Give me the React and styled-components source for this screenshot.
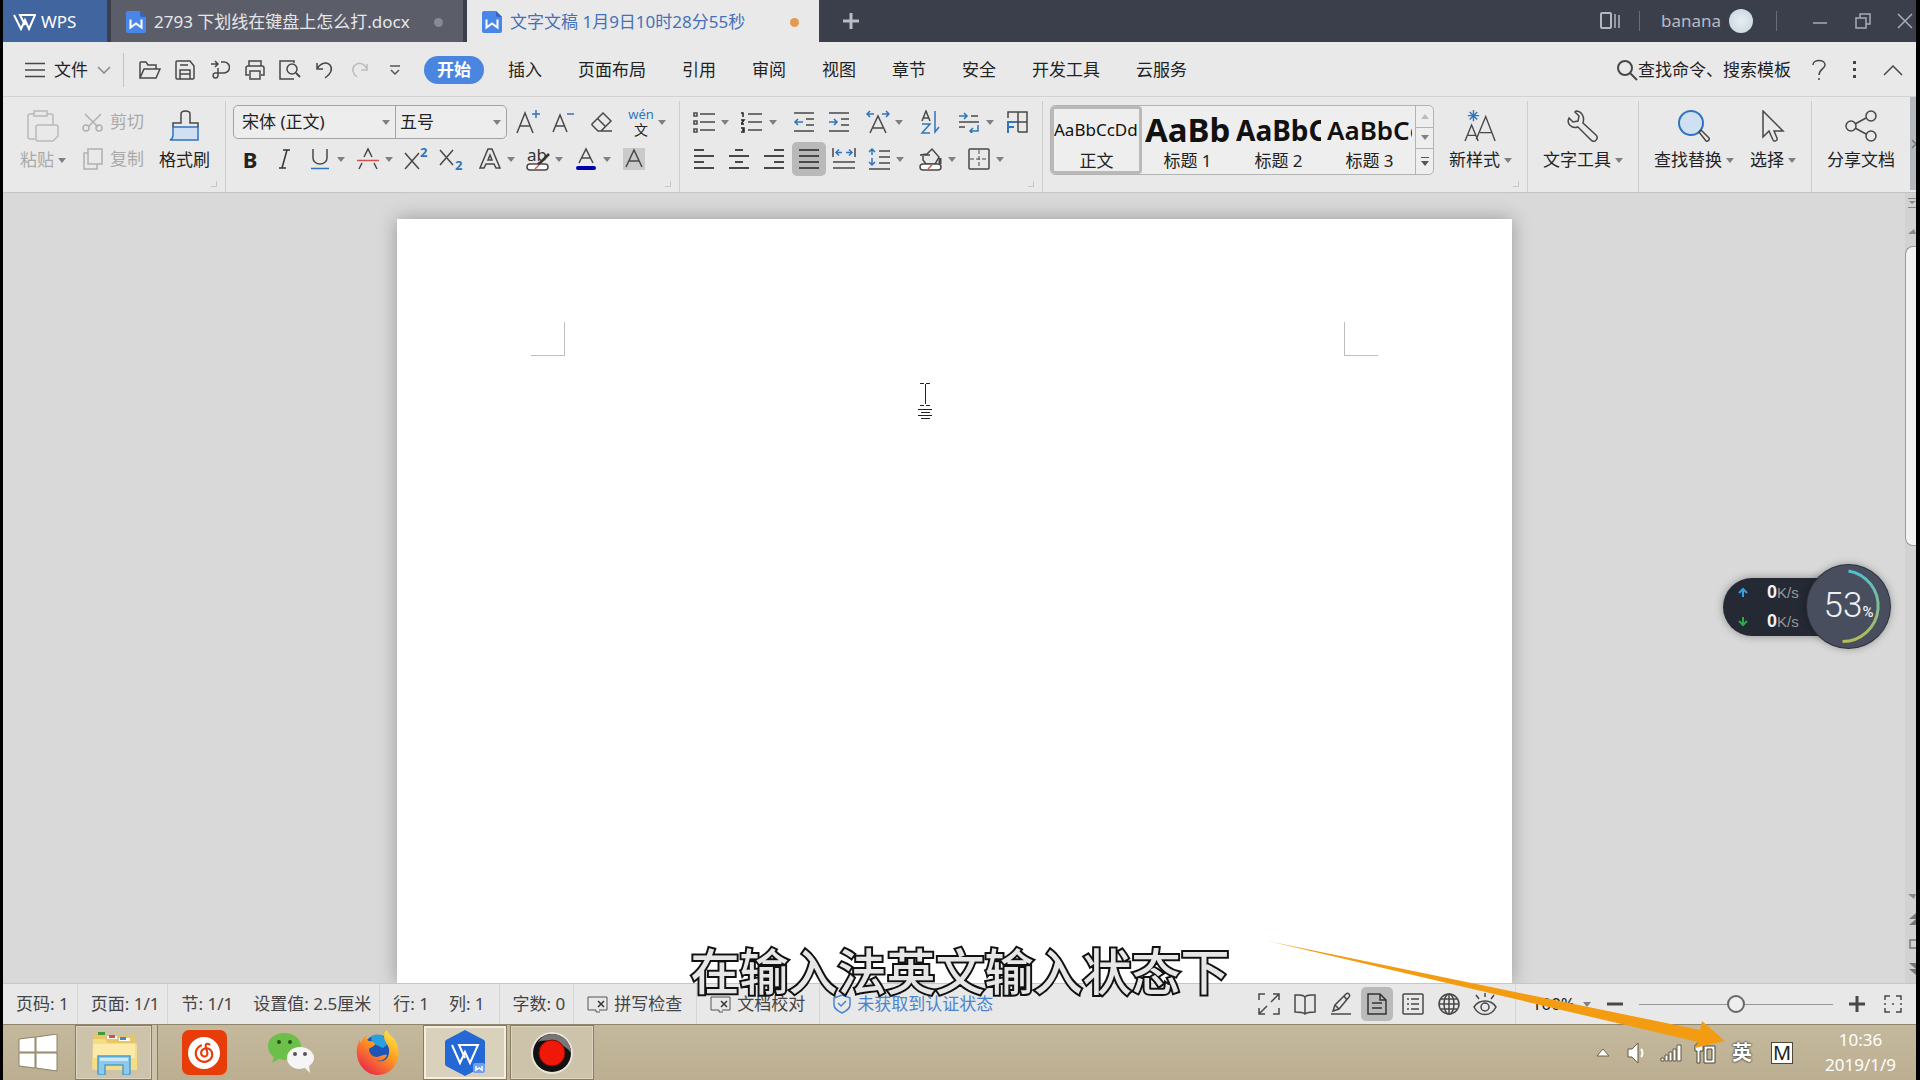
import React from 'react';
import styled, { createGlobalStyle, css } from 'styled-components';
import { SiNeteasecloudmusic } from 'react-icons/si';

const BLUE = '#2f74bd';

const MENUS = ['插入', '页面布局', '引用', '审阅', '视图', '章节', '安全', '开发工具', '云服务'];

const STYLES = [
  { name: '正文', sample: 'AaBbCcDd', size: 17, weight: 400, active: true },
  { name: '标题 1', sample: 'AaBbCcDd', size: 33, weight: 700 },
  { name: '标题 2', sample: 'AaBbCcDd', size: 28, weight: 700 },
  { name: '标题 3', sample: 'AaBbCcDd', size: 26, weight: 600 },
];

function Icon({ w = 24, h = 24, children, ...rest }) {
  return (
    <Svg width={w} height={h} viewBox={`0 0 ${w} ${h}`} aria-hidden="true" {...rest}>
      {children}
    </Svg>
  );
}

function DocLogo() {
  return (
    <Icon w={20} h={22} stroke="none">
      <path d="M2 0h12l6 6v14a2 2 0 0 1-2 2H2a2 2 0 0 1-2-2V2a2 2 0 0 1 2-2z" fill="#4a86e8" />
      <path d="M14 0l6 6h-4a2 2 0 0 1-2-2z" fill="#3566bd" />
      <path d="M4.500 8.500v8l5.500-4 5.500 4v-8" stroke="#fff" strokeWidth="2" fill="none" />
    </Icon>
  );
}

function Tool({ label, caret, active, children }) {
  return (
    <ToolButton type="button" aria-label={label} title={label} $caret={caret}>
      <ToolFace $active={active}>{children}</ToolFace>
      {caret && <Caret />}
    </ToolButton>
  );
}

function Big({ label, caret, muted, children }) {
  return (
    <BigButton type="button" $muted={muted}>
      {children}
      <BigLabel>
        {label}
        {caret && <Caret />}
      </BigLabel>
    </BigButton>
  );
}

function TitleBar() {
  return (
    <TitleBarBox>
      <WpsButton type="button">
        <Icon w={23} h={17} stroke="#fff" strokeWidth="2">
          <path d="M1 1l7 14 4-9 4 9 6-14H7l5 10" />
        </Icon>
        WPS
      </WpsButton>
      <Tab type="button">
        <DocLogo />
        2793 下划线在键盘上怎么打.docx
        <TabDot />
      </Tab>
      <Tab type="button" $active>
        <DocLogo />
        文字文稿 1月9日10时28分55秒
        <TabDot $active />
      </Tab>
      <NewTab type="button" aria-label="新建">
        <Icon w={18} h={18} stroke="#b9bcc4" strokeWidth="3">
          <path d="M9 1v16M1 9h16" />
        </Icon>
      </NewTab>
      <TitleRight>
        <WindowButton type="button" aria-label="工作区">
          <Icon w={20} h={18} stroke="#b4b7c0" strokeWidth="2">
            <rect x="1" y="1" width="10" height="15" rx="1" />
            <path d="M15 2v14M19 3v13" strokeWidth="1.500" />
          </Icon>
        </WindowButton>
        <TitleLine />
        <User type="button">
          banana
          <Avatar />
        </User>
        <TitleLine />
        <WindowButton type="button" aria-label="最小化">
          <Icon w={16} h={16} stroke="#a9acb6">
            <path d="M1 10h14" />
          </Icon>
        </WindowButton>
        <WindowButton type="button" aria-label="还原">
          <Icon w={16} h={16} stroke="#a9acb6">
            <rect x="1" y="5" width="10" height="10" />
            <path d="M5 5V1h10v10h-4" />
          </Icon>
        </WindowButton>
        <WindowButton type="button" aria-label="关闭">
          <Icon w={16} h={16} stroke="#a9acb6">
            <path d="M1 1l14 14M15 1L1 15" />
          </Icon>
        </WindowButton>
      </TitleRight>
    </TitleBarBox>
  );
}

function MenuBar() {
  return (
    <MenuBarBox>
      <FileButton type="button">
        <Icon w={20} h={16}>
          <path d="M0 1.500h20M0 8h20M0 14.500h20" />
        </Icon>
        文件
        <Icon w={14} h={8} stroke="#8a8a8a">
          <path d="M1 1l6 6 6-6" />
        </Icon>
      </FileButton>
      <QuickBar>
        <QuickButton type="button" aria-label="打开">
          <Icon w={22} h={20}>
            <path d="M1 18V3a1 1 0 0 1 1-1h5l2 3h8v4M1 18l4-9h16l-4 9z" />
          </Icon>
        </QuickButton>
        <QuickButton type="button" aria-label="保存">
          <Icon w={20} h={20}>
            <path d="M2 1h13l4 5v12a1 1 0 0 1-1 1H2a1 1 0 0 1-1-1V2a1 1 0 0 1 1-1z" />
            <path d="M5 19v-9h10v9M5 5h8M5 14h10" />
          </Icon>
        </QuickButton>
        <QuickButton type="button" aria-label="输出为PDF">
          <Icon w={20} h={20}>
            <path d="M1 4h7M5 1l3 3-3 3M11 2h3a5 5 0 0 1 0 11H5a2.500 2.500 0 1 0 3 3V8" />
          </Icon>
        </QuickButton>
        <QuickButton type="button" aria-label="打印">
          <Icon w={20} h={20}>
            <path d="M4 6V1h12v5M4 15H1V8a2 2 0 0 1 2-2h14a2 2 0 0 1 2 2v7h-3M5 11h10v8H5z" />
          </Icon>
        </QuickButton>
        <QuickButton type="button" aria-label="打印预览">
          <Icon w={22} h={20}>
            <path d="M15 3V1H1v18h14" />
            <circle cx="13" cy="9" r="5" />
            <path d="M17 13l4 4" strokeWidth="2" />
          </Icon>
        </QuickButton>
        <QuickButton type="button" aria-label="撤销">
          <Icon w={20} h={20}>
            <path d="M2 3v6h6M2 9c4-7 10-7 13-4 3 4 1 9-5 13" />
          </Icon>
        </QuickButton>
        <QuickButton type="button" aria-label="恢复">
          <Icon w={20} h={20} stroke="#bcbcbc">
            <path d="M17 4v6h-6M17 9c-3-6-8-7-12-4-4 4-2 9 2 12" />
          </Icon>
        </QuickButton>
        <QuickButton type="button" aria-label="自定义快速访问工具栏">
          <Icon w={14} h={12} stroke="#555">
            <path d="M2 2h10M3 6l4 4 4-4" />
          </Icon>
        </QuickButton>
      </QuickBar>
      <Menus>
        <MenuItem type="button" $active>开始</MenuItem>
        {MENUS.map((name) => (
          <MenuItem type="button" key={name}>{name}</MenuItem>
        ))}
      </Menus>
      <MenuRight>
        <Finder type="button">
          <Icon w={22} h={22} strokeWidth="2">
            <circle cx="9" cy="9" r="7" />
            <path d="M14 14l7 7" />
          </Icon>
          查找命令、搜索模板
        </Finder>
        <HelpButton type="button" aria-label="帮助">
          <Icon w={16} h={22}>
            <path d="M2 6c0-6 12-6 12 0 0 4-6 4-6 10M8 19v2" />
          </Icon>
        </HelpButton>
        <HelpButton type="button" aria-label="更多">
          <Icon w={4} h={20} stroke="none">
            <path d="M0 1h3v3H0zM0 8h3v3H0zM0 15h3v3H0z" fill="#444" />
          </Icon>
        </HelpButton>
        <HelpButton type="button" aria-label="收起功能区">
          <Icon w={20} h={12}>
            <path d="M1 11l9-9 9 9" />
          </Icon>
        </HelpButton>
      </MenuRight>
    </MenuBarBox>
  );
}

function AlignIcon({ rows }) {
  return (
    <Icon w={22} h={22} strokeWidth="2" shapeRendering="crispEdges">
      {rows.map(([x1, x2], i) => (
        <path key={i} d={`M${x1} ${2 + i * 6}H${x2}`} />
      ))}
    </Icon>
  );
}

function ClipboardGroup() {
  return (
    <Group $first>
      <Big label="粘贴" caret muted>
        <Icon w={32} h={32} stroke="#b9b9b9">
          <path d="M8 29H3a2 2 0 0 1-2-2V6a2 2 0 0 1 2-2h4M20 4h4a2 2 0 0 1 2 2v8" />
          <path d="M7 1h13v5H7z" />
          <path d="M11 15h18a2 2 0 0 1 2 2v9l-5 5H11a2 2 0 0 1-2-2V17a2 2 0 0 1 2-2z" />
        </Icon>
      </Big>
      <Stack>
        <SmallButton type="button">
          <Icon w={22} h={20} stroke="#b0b0b0">
            <path d="M3 2l13 13M19 2L6 15" />
            <circle cx="4" cy="16" r="3" />
            <circle cx="17" cy="16" r="3" />
          </Icon>
          剪切
        </SmallButton>
        <SmallButton type="button">
          <Icon w={22} h={22} stroke="#b0b0b0">
            <path d="M6 1h14v15H6zM6 5H2v16h13v-5" />
          </Icon>
          复制
        </SmallButton>
      </Stack>
      <Big label="格式刷">
        <Icon w={32} h={32}>
          <path d="M4 17h25v13H1c2-1 3-3 3-5z" fill="#cfe0f3" stroke={BLUE} />
          <path d="M4 17v-4h8V4c0-4 9-4 9 0v9h8v4" />
        </Icon>
      </Big>
      <Corner />
    </Group>
  );
}

function FontGroup() {
  return (
    <Group>
      <Stack>
        <Row>
          <Combos>
            <Combo $grow>
              <Select aria-label="字体" defaultValue="宋体 (正文)">
                <option>宋体 (正文)</option>
              </Select>
              <Caret />
            </Combo>
            <Combo>
              <Select aria-label="字号" defaultValue="五号">
                <option>五号</option>
              </Select>
              <Caret />
            </Combo>
          </Combos>
          <Cluster>
            <Tool label="增大字号">
              <Icon w={26} h={26}>
                <path d="M2 24L10 4l8 20M5 17h10" />
                <path d="M17 5h8M21 1v8" stroke={BLUE} />
              </Icon>
            </Tool>
            <Tool label="减小字号">
              <Icon w={26} h={26}>
                <path d="M3 23L10 6l7 17M6 17h8" />
                <path d="M17 5h7" stroke={BLUE} />
              </Icon>
            </Tool>
          </Cluster>
          <Cluster>
            <Tool label="清除格式">
              <Icon>
                <path d="M2 14L13 3l8 8-10 10H8l-6-6zM8 9l7 7M11 21h11" />
              </Icon>
            </Tool>
          </Cluster>
          <Cluster>
            <Tool label="拼音指南" caret>
              <Pinyin>wén</Pinyin>
              <PinyinBase>文</PinyinBase>
            </Tool>
          </Cluster>
        </Row>
        <Row>
          <Cluster>
            <Tool label="加粗">
              <Letter>B</Letter>
            </Tool>
            <Tool label="倾斜">
              <Icon stroke="#333">
                <path d="M10 3h7M6 21h7M14 3L9 21" />
              </Icon>
            </Tool>
            <Tool label="下划线" caret>
              <Icon>
                <path d="M5 2v9a7 6 0 0 0 14 0V2" />
                <path d="M3 21.500h18" stroke={BLUE} />
              </Icon>
            </Tool>
            <Tool label="删除线" caret>
              <Icon>
                <path d="M8 10l4-8 4 8M6 16l-3 6M18 16l3 6" />
                <path d="M1 13.500h22" stroke="#d4504f" />
              </Icon>
            </Tool>
            <Tool label="上标">
              <Icon w={26}>
                <path d="M2 6l14 16M16 6L2 22" />
                <text x="17" y="10" fill={BLUE}>2</text>
              </Icon>
            </Tool>
            <Tool label="下标">
              <Icon w={26}>
                <path d="M2 3l13 15M15 3L2 18" />
                <text x="17" y="23" fill={BLUE}>2</text>
              </Icon>
            </Tool>
          </Cluster>
          <Cluster>
            <Tool label="文字效果" caret>
              <Icon>
                <path d="M2 21L10 2h4l8 19h-4l-2-4H8l-2 4zM10 13l2-5 2 5z" />
              </Icon>
            </Tool>
            <Tool label="突出显示" caret>
              <Icon>
                <LightText x="1" y="14">ab</LightText>
                <rect x="1" y="17" width="21" height="6" rx="3" fill="#fff" />
                <path d="M9 22l4-4" stroke="#d4504f" />
                <path d="M23 7l-8 8-3 2" strokeWidth="2.500" stroke="#333" />
              </Icon>
            </Tool>
            <Tool label="字体颜色" caret>
              <Icon>
                <path d="M5 16l7-14 7 14M8 11h8" />
                <path d="M4 21h16" stroke="#0000ad" strokeWidth="4" strokeLinecap="round" />
              </Icon>
            </Tool>
            <Tool label="字符底纹">
              <Icon>
                <rect x="1" y="1" width="22" height="22" fill="#cacaca" stroke="none" />
                <path d="M4 20L12 3l8 17M7 14h10" />
              </Icon>
            </Tool>
          </Cluster>
        </Row>
      </Stack>
      <Corner />
    </Group>
  );
}

function ParagraphGroup() {
  return (
    <Group>
      <Stack>
        <Row>
          <Cluster>
            <Tool label="项目符号" caret>
              <Icon w={22} h={22}>
                <path d="M7 3h15M7 11h15M7 19h15" />
                <path d="M1 2h3v3H1zM1 10h3v3H1zM1 18h3v3H1z" />
              </Icon>
            </Tool>
            <Tool label="编号" caret>
              <Icon w={22} h={22}>
                <path d="M7 3h14M7 11h14M7 19h14" />
                <path d="M0 2h2v4M0 9h3l-3 4h3M0 17h3v4H0M1 19h2" stroke="#222" />
              </Icon>
            </Tool>
          </Cluster>
          <Cluster>
            <Tool label="减少缩进量">
              <Icon w={22} h={22}>
                <path d="M1 2h20M13 8h8M13 14h8M1 20h20" />
                <path d="M2 11h8M5 8l-3 3 3 3" stroke={BLUE} />
              </Icon>
            </Tool>
            <Tool label="增加缩进量">
              <Icon w={22} h={22}>
                <path d="M1 2h20M13 8h8M13 14h8M1 20h20" />
                <path d="M1 11h8M6 8l3 3-3 3" stroke={BLUE} />
              </Icon>
            </Tool>
          </Cluster>
          <Cluster>
            <Tool label="中文版式" caret>
              <Icon>
                <path d="M4 23l8-17 8 17M7 18h10" />
                <path d="M1 4h7M4 1L1 4l3 3M16 4h7M20 1l3 3-3 3" stroke={BLUE} />
              </Icon>
            </Tool>
          </Cluster>
          <Cluster>
            <Tool label="排序">
              <Icon>
                <path d="M4 11l4-10 4 10M5 8h6" />
                <path d="M4 14h8l-8 9h8M17 1v21l4-5" stroke={BLUE} />
              </Icon>
            </Tool>
          </Cluster>
          <Cluster>
            <Tool label="显示/隐藏编辑标记" caret>
              <Icon w={22} h={22}>
                <path d="M13 5h7M1 11h20M1 16h6" />
                <path d="M1 5h8M6 2l3 3-3 3M20 14v6h-8M15 17l-3 3 3 3" stroke={BLUE} />
              </Icon>
            </Tool>
            <Tool label="制表位">
              <Icon>
                <path d="M3 8V2h19v20h-9M13 2v20M9 12h13" />
                <path d="M3 23V12h7M3 17h6" stroke={BLUE} strokeWidth="2" />
              </Icon>
            </Tool>
          </Cluster>
        </Row>
        <Row>
          <Cluster>
            <Tool label="左对齐">
              <AlignIcon rows={[[1, 11], [1, 21], [1, 11], [1, 21]]} />
            </Tool>
            <Tool label="居中对齐">
              <AlignIcon rows={[[7, 15], [1, 21], [7, 15], [1, 21]]} />
            </Tool>
            <Tool label="右对齐">
              <AlignIcon rows={[[11, 21], [1, 21], [11, 21], [1, 21]]} />
            </Tool>
            <Tool label="两端对齐" active>
              <AlignIcon rows={[[1, 21], [1, 21], [1, 21], [1, 21]]} />
            </Tool>
            <Tool label="分散对齐">
              <Icon>
                <path d="M1 1v9M23 1v9M1 15h22M1 21h22" />
                <path d="M4 5.500h6M7 2.500l-3 3 3 3M14 5.500h6M17 2.500l3 3-3 3" stroke={BLUE} />
              </Icon>
            </Tool>
            <Tool label="行距" caret>
              <Icon w={22} h={22}>
                <path d="M11 3h11M11 9h11M11 15h11M1 21h21" />
                <path d="M4 1v6M1 4l3-3 3 3M4 10v7M1 14l3 3 3-3" stroke={BLUE} />
              </Icon>
            </Tool>
          </Cluster>
          <Cluster>
            <Tool label="底纹颜色" caret>
              <Icon>
                <path d="M1 8l7-1 5-5 7 8-4 7H7l-3-4V9M1 8h10" />
                <path d="M21 11v6" strokeWidth="3" />
                <rect x="1" y="17" width="21" height="6" rx="3" fill="#fff" />
                <path d="M9 22l4-4" stroke="#d4504f" />
              </Icon>
            </Tool>
            <Tool label="边框" caret>
              <Icon w={22} h={22}>
                <rect x="1" y="1" width="20" height="20" rx="1" />
                <path d="M11 2v18M2 11h18" strokeDasharray="4 2" strokeWidth="1" />
              </Icon>
            </Tool>
          </Cluster>
        </Row>
      </Stack>
      <Corner />
    </Group>
  );
}

function StyleGroup() {
  return (
    <Group>
      <Gallery>
        {STYLES.map((item) => (
          <StyleCard type="button" key={item.name} $active={item.active}>
            <Sample $size={item.size} $weight={item.weight}>{item.sample}</Sample>
            {item.name}
          </StyleCard>
        ))}
        <GalleryNav>
          <NavButton type="button" aria-label="上一行">
            <Icon w={8} h={5} stroke="none"><path d="M0 5l4-5 4 5z" fill="#bbb" /></Icon>
          </NavButton>
          <NavButton type="button" aria-label="下一行">
            <Caret />
          </NavButton>
          <NavButton type="button" aria-label="展开">
            <Icon w={8} h={9} stroke="none"><path d="M0 0h8v1H0zM0 4h8l-4 5z" fill="#555" /></Icon>
          </NavButton>
        </GalleryNav>
      </Gallery>
      <Big label="新样式" caret>
        <Icon w={36} h={34}>
          <path d="M1 33l7-17 7 17M4 27h8M13 31L23 7l10 26M17 24h12" />
          <path d="M10 0v12M4 6h12M6 2l8 8M14 2l-8 8" stroke={BLUE} />
        </Icon>
      </Big>
      <Corner />
    </Group>
  );
}

function ToolGroups() {
  return (
    <>
      <Group>
        <Big label="文字工具" caret>
          <Icon w={32} h={32}>
            <path d="M9 1l-1 1 4 4-1 5-5 1-4-4c-3 6 3 11 9 9l13 13c4 4 8-2 5-5L16 13c2-7-2-12-7-12z" />
          </Icon>
        </Big>
      </Group>
      <Group>
        <Big label="查找替换" caret>
          <Icon w={32} h={32}>
            <circle cx="13" cy="13" r="12" fill="#cfe0f3" stroke={BLUE} strokeWidth="2" />
            <path d="M21 22l2-2 8 8c1 1-1 4-3 3z" />
          </Icon>
        </Big>
        <Big label="选择" caret>
          <Icon w={24} h={32}>
            <path d="M2 1v26l6-6 4 9c1 2 5 1 4-2l-3-7h9z" />
          </Icon>
        </Big>
      </Group>
      <Group $last>
        <Big label="分享文档">
          <Icon w={32} h={32}>
            <circle cx="6" cy="16" r="5" />
            <circle cx="26" cy="6" r="5" />
            <circle cx="26" cy="26" r="5" />
            <path d="M10 14l11-6M10 18l11 6" />
          </Icon>
        </Big>
      </Group>
      <RibbonMore type="button" aria-label="展开功能区">
        <Icon w={6} h={10} stroke="#777"><path d="M2 1l4 4-4 4" /></Icon>
      </RibbonMore>
    </>
  );
}

function Workspace() {
  return (
    <WorkspaceBox>
      <Desk>
        <Page>
          <Marks>
            <Mark $left />
            <Mark />
          </Marks>
          <Pointer>
            <Icon w={16} h={38} stroke="#222" shapeRendering="crispEdges">
              <path d="M3 1h4M9 1h4M8 2v20M3 23h4M9 23h4" strokeWidth="1" />
              <path d="M1 27h14M4 30h9M1 33h14M4 36h9" strokeWidth="1" />
            </Icon>
          </Pointer>
        </Page>
      </Desk>
      <ScrollTrack>
        <Icon w={8} h={12} stroke="none"><path d="M0 1h8v1H0zM1 4l3 3 4-3zM0 10h8v1H0z" fill="#888" /></Icon>
        <Icon w={8} h={5} stroke="none"><path d="M0 5l6-5 2 5z" fill="#888" /></Icon>
        <ScrollThumb />
        <ScrollEnd>
          <Icon w={8} h={5} stroke="none"><path d="M0 0h8L6 5z" fill="#888" /></Icon>
          <Icon w={8} h={12} stroke="none"><path d="M1 6l7-6v6zM1 12l7-6v6z" fill="#777" /></Icon>
          <Icon w={8} h={10} stroke="#777"><path d="M8 1H2v8h6" /></Icon>
          <Icon w={8} h={12} stroke="none"><path d="M1 0h7v6zM1 6h7v6z" fill="#777" /></Icon>
        </ScrollEnd>
      </ScrollTrack>
      <Monitor>
        <Speeds>
          <Speed>
            <Icon w={10} h={11} stroke="#3b9be0" strokeWidth="2"><path d="M5 10V2M1 6l4-4 4 4" /></Icon>
            <Rate><strong>0</strong>K/s</Rate>
          </Speed>
          <Speed>
            <Icon w={10} h={11} stroke="#2fa84a" strokeWidth="2"><path d="M5 1v8M1 5l4 4 4-4" /></Icon>
            <Rate><strong>0</strong>K/s</Rate>
          </Speed>
        </Speeds>
        <Dial>
          <DialRing viewBox="0 0 84 84" aria-hidden="true">
            <defs>
              <linearGradient id="ring" x1="0" y1="0" x2="0" y2="1">
                <stop offset="0" stopColor="#4fc0cf" />
                <stop offset="1" stopColor="#b3bd55" />
              </linearGradient>
            </defs>
            <path d="M42 6A36 36 0 0 1 36 77.500" fill="none" stroke="url(#ring)" strokeWidth="3" />
          </DialRing>
          <DialText>53<small>%</small></DialText>
        </Dial>
      </Monitor>
    </WorkspaceBox>
  );
}

function BookCheck() {
  return (
    <Icon w={21} h={18} stroke="#555">
      <path d="M9 2H1v13h8M9 2h3M9 15v2h4M12 2h8v13h-8" strokeWidth="1" />
      <path d="M11 6l6 6M17 6l-6 6" stroke="#333" />
    </Icon>
  );
}

function StatusBar() {
  return (
    <StatusBarBox>
      <StatusItem>页码: 1</StatusItem>
      <StatusItem>页面: 1/1</StatusItem>
      <StatusItem>
        <span>节: 1/1</span>
        <span>设置值: 2.5厘米</span>
      </StatusItem>
      <StatusItem $wide>
        <span>行: 1</span>
        <span>列: 1</span>
      </StatusItem>
      <StatusItem>字数: 0</StatusItem>
      <StatusItem $wide $tight>
        <BookCheck />
        拼写检查
      </StatusItem>
      <StatusItem $wide $tight>
        <BookCheck />
        文档校对
      </StatusItem>
      <StatusItem $wide $tight $link>
        <Icon w={18} h={20} stroke="#4a83cf">
          <path d="M9 1l8 3v7c0 4-4 6-8 8-4-2-8-4-8-8V4z" />
          <path d="M5 9l3 3 5-5" />
        </Icon>
        未获取到认证状态
      </StatusItem>
      <Views>
        <ViewButton type="button" aria-label="全屏显示">
          <Icon w={22} h={22}>
            <path d="M1 7V1h6M15 1h6v6M21 15v6h-6M7 21H1v-6M20 2l-7 7M2 20l7-7" />
          </Icon>
        </ViewButton>
        <ViewButton type="button" aria-label="阅读版式">
          <Icon w={22} h={22}>
            <path d="M11 4c-2-3-6-2-10-2v17c4 0 8 0 10 2 2-2 6-2 10-2V2c-4 0-8-1-10 2zM11 4v17" />
          </Icon>
        </ViewButton>
        <ViewButton type="button" aria-label="写作模式">
          <Icon w={22} h={24}>
            <path d="M1 22h20M3 19l2-6L16 2c2-2 5 1 3 3L9 17zM14 4l3 4M5 13l4 4" />
          </Icon>
        </ViewButton>
        <ViewButton type="button" aria-label="页面视图" $active>
          <Icon w={20} h={22} stroke="#333">
            <path d="M1 1h12l6 6v14H1zM13 1v6h6M5 10h10M5 15h10" />
          </Icon>
        </ViewButton>
        <ViewButton type="button" aria-label="大纲视图">
          <Icon w={22} h={22}>
            <rect x="1" y="1" width="20" height="20" rx="1" />
            <path d="M5 6h2M5 11h2M5 16h2M9 6h8M9 11h8M9 16h8" />
          </Icon>
        </ViewButton>
        <ViewButton type="button" aria-label="Web版式">
          <Icon w={22} h={22}>
            <circle cx="11" cy="11" r="10" />
            <ellipse cx="11" cy="11" rx="5" ry="10" />
            <path d="M11 1v20M1 11h20M3 6h16M3 16h16" />
          </Icon>
        </ViewButton>
        <ViewButton type="button" aria-label="护眼模式">
          <Icon w={24} h={24}>
            <path d="M1 15c5-8 17-8 22 0-5 10-17 10-22 0zM12 1v4M3 3l3 4M21 3l-3 4" />
            <circle cx="12" cy="15" r="4" />
          </Icon>
        </ViewButton>
      </Views>
      <Zoom>
        <ZoomValue type="button">100%<Caret /></ZoomValue>
        <ViewButton type="button" aria-label="缩小">
          <Icon w={16} h={16} strokeWidth="3"><path d="M0 8h16" /></Icon>
        </ViewButton>
        <Slider type="range" min="0" max="100" defaultValue="50" aria-label="缩放" />
        <ViewButton type="button" aria-label="放大">
          <Icon w={16} h={16} strokeWidth="3"><path d="M0 8h16M8 0v16" /></Icon>
        </ViewButton>
        <ViewButton type="button" aria-label="最佳显示比例">
          <Icon w={18} h={18}>
            <path d="M1 5V1h5M12 1h5v4M17 13v4h-5M6 17H1v-4M8 9h2M1 8v2M17 8v2" />
          </Icon>
        </ViewButton>
      </Zoom>
    </StatusBarBox>
  );
}

function ExplorerIcon() {
  return (
    <Icon w={46} h={44} stroke="none">
      <path d="M3 4l2-2h9l2 3h28v8H3z" fill="#e9c568" />
      <rect x="7" y="1" width="7" height="3" fill="#3f9a3c" />
      <rect x="16" y="5" width="10" height="3" fill="#fff" />
      <rect x="18" y="4" width="6" height="3" fill="#d6513b" />
      <rect x="28" y="7" width="11" height="3" fill="#fff" />
      <rect x="29" y="6" width="6" height="3" fill="#3b8fc9" />
      <path d="M2 8h12l3 4h27a2 2 0 0 1 2 2v25H3a2 2 0 0 1-2-2z" fill="#f5dd86" />
      <path d="M2 13h42v14H2z" fill="#fbeaa8" />
      <path d="M7 25h32v17a2 2 0 0 1-2 2h-5V34H14v10H9a2 2 0 0 1-2-2z" fill="#8cc9ea" stroke="#4b9fcb" />
      <path d="M9 27h28v3H9z" fill="#c8eafb" />
    </Icon>
  );
}

function FirefoxIcon() {
  return (
    <Icon w={46} h={46} stroke="none">
      <defs>
        <linearGradient id="fox" x1="0.900" y1="0" x2="0.200" y2="1">
          <stop offset="0" stopColor="#fff04a" />
          <stop offset="0.450" stopColor="#ff9a1f" />
          <stop offset="1" stopColor="#e8214f" />
        </linearGradient>
      </defs>
      <circle cx="23" cy="20" r="15" fill="#1c55b5" />
      <path d="M16 6c8-4 15 0 18 7l-6 5-11-5z" fill="#2a9fe0" />
      <path
        d="M5 9c0 2 0 3 1 4C7 9 10 6 12 5c-1 3 0 5 2 6 3 0 5 1 6 3-1 3-4 3-6 5 0 4 3 8 8 8 5-1 7-3 10-2-2 5-7 7-12 5 9 4 15-2 14-11-1-5-5-8-5-13 0-3 1-5 3-6 1 5 7 7 9 12 7 14-1 33-18 33C7 45-4 26 5 9z"
        fill="url(#fox)"
      />
    </Icon>
  );
}

function Taskbar() {
  return (
    <TaskbarBox>
      <TaskButton type="button" aria-label="开始菜单" $start>
        <Icon w={40} h={38} stroke="#8c8267" strokeWidth="1">
          <path d="M1 5l16-2v15H1zM18 3l21-3v18H18zM1 19h16v15L1 32zM18 19h21v18l-21-3z" fill="#fff" />
        </Icon>
      </TaskButton>
      <TaskButton type="button" aria-label="文件资源管理器" $open $stacked>
        <ExplorerIcon />
      </TaskButton>
      <TaskButton type="button" aria-label="网易云音乐">
        <NetEase>
          <SiNeteasecloudmusic size={32} />
        </NetEase>
      </TaskButton>
      <TaskButton type="button" aria-label="微信">
        <Icon w={48} h={42} stroke="none">
          <path d="M17 1C7 1 1 7 1 14c0 5 3 9 6 11l-2 6 7-4c18 4 22-5 22-13C34 7 27 1 17 1z" fill="#6cc04a" />
          <circle cx="12" cy="10" r="2" fill="#27511a" />
          <circle cx="23" cy="10" r="2" fill="#27511a" />
          <path d="M33 15c-8 0-13 5-13 11s5 11 13 11l5-1 5 5-1-7c3-2 5-5 5-8 0-6-6-11-14-11z" fill="#f5f5f5" />
          <circle cx="28" cy="22" r="2" fill="#555" />
          <circle cx="38" cy="22" r="2" fill="#555" />
        </Icon>
      </TaskButton>
      <TaskButton type="button" aria-label="Firefox">
        <FirefoxIcon />
      </TaskButton>
      <TaskButton type="button" aria-label="WPS" $open $current>
        <Icon w={42} h={46} stroke="none">
          <path d="M21 0l19 10a3 3 0 0 1 1 3v20a3 3 0 0 1-1 3L21 46 2 36a3 3 0 0 1-1-3V13a3 3 0 0 1 1-3z" fill="#2468d6" />
          <path d="M8 15l8 18 5-11 5 11 8-18H15l6 13" fill="none" stroke="#fff" strokeWidth="2" />
          <rect x="29" y="33" width="12" height="10" rx="2" fill="#6f9fee" />
          <path d="M32 36v4l3-2 3 2v-4" fill="none" stroke="#fff" />
        </Icon>
      </TaskButton>
      <TaskButton type="button" aria-label="录屏" $open>
        <Icon w={44} h={44} stroke="none">
          <circle cx="22" cy="22" r="21" fill="#e9e4d8" />
          <circle cx="22" cy="22" r="19" fill="#111" />
          <path d="M22 3a19 19 0 0 1 19 19c-6-10-28-16-34-10A19 19 0 0 1 22 3z" fill="#777" />
          <circle cx="22" cy="22" r="13" fill="#f01808" stroke="#7a0d05" strokeWidth="1" />
        </Icon>
      </TaskButton>
      <Tray>
        <TrayButton type="button" aria-label="显示隐藏的图标">
          <Icon w={14} h={9} stroke="#6b634e" strokeWidth="1"><path d="M1 8l6-7 6 7z" fill="#fff" /></Icon>
        </TrayButton>
        <TrayButton type="button" aria-label="音量">
          <Icon w={20} h={22} stroke="#5f5844" strokeWidth="1">
            <path d="M1 7h4l6-6v20l-6-6H1z" fill="#fff" />
            <path d="M14 7c2 2 2 6 0 8" stroke="#fff" strokeWidth="2" />
          </Icon>
        </TrayButton>
        <TrayButton type="button" aria-label="网络">
          <Icon w={22} h={18} stroke="#5f5844" strokeWidth="1">
            <path d="M1 14h3v3H1zM5 11h3v6H5zM9 8h3v9H9zM13 5h3v12h-3zM17 1h4v16h-4z" fill="#fff" />
          </Icon>
        </TrayButton>
        <TrayButton type="button" aria-label="设备">
          <Icon w={22} h={22} stroke="#4d4737" strokeWidth="1">
            <path d="M1 3h2V1h4v2h2v6H6v12H3V9H1zM10 4h11v17H10z" fill="#fff" />
            <path d="M13 7h5v11h-5z" fill="#bdb094" />
          </Icon>
        </TrayButton>
        <TrayButton type="button" $wide><Ime>英</Ime></TrayButton>
        <TrayButton type="button" $wide><ImeMode>M</ImeMode></TrayButton>
        <Clock type="button">
          <span>10:36</span>
          <span>2019/1/9</span>
        </Clock>
      </Tray>
    </TaskbarBox>
  );
}

function App() {
  return (
    <Screen>
      <GlobalStyle />
      <TitleBar />
      <MenuBar />
      <Ribbon>
        <ClipboardGroup />
        <FontGroup />
        <ParagraphGroup />
        <StyleGroup />
        <ToolGroups />
      </Ribbon>
      <Workspace />
      <StatusBar />
      <Taskbar />
      <Caption>在输入法英文输入状态下</Caption>
      <Arrow viewBox="0 0 460 110" aria-hidden="true">
        <path d="M0 2L432 91 434 82 457 102 427 109 430 103z" fill="#f39c12" />
      </Arrow>
    </Screen>
  );
}
export default App;

const GlobalStyle = createGlobalStyle`
  * {
    box-sizing: border-box;
  }
  body {
    margin: 0;
    background: #000;
  }
  body, button, select, input {
    font-family: 'Noto Sans', 'Noto Sans CJK SC', sans-serif;
    font-size: 17px;
    line-height: 20px;
    color: #222;
  }
  button {
    display: flex;
    align-items: center;
    padding: 0;
    border: none;
    background: none;
    white-space: nowrap;
  }
`;

const Screen = styled.div`
  position: relative;
  display: flex;
  flex-direction: column;
  height: 100vh;
  padding: 0 4px 0 3px;
  background: #000;
  overflow: hidden;
`;

const Svg = styled.svg`
  display: block;
  flex: none;
  fill: none;
  stroke: ${(p) => p.stroke || '#484848'};
  stroke-width: ${(p) => p.strokeWidth || 1.5};
  text {
    stroke: none;
    font-size: 13px;
    font-weight: 700;
  }
`;

const LightText = styled.text`
  && {
    fill: #333;
    font-size: 17px;
    font-weight: 400;
  }
`;

const Caret = styled.i`
  flex: none;
  border: 4px solid transparent;
  border-top: 5px solid #808080;
  border-bottom: 0;
`;

/* title bar */
const TitleBarBox = styled.header`
  display: flex;
  flex: none;
  height: 42px;
  background: #3b3f4c;
`;

const WpsButton = styled.button`
  width: 104px;
  padding: 2px 0 0 10px;
  gap: 5px;
  background: #41659f;
  color: #fff;
`;

const Tab = styled.button`
  width: 352px;
  margin-left: 4px;
  padding: 2px 20px 0 15px;
  gap: 8px;
  background: #5b5d68;
  color: #e6e7ea;
  ${(p) =>
    p.$active &&
    css`
      background: #e9e9e9;
      color: #4571b8;
    `}
`;

const TabDot = styled.i`
  width: 9px;
  height: 9px;
  margin-left: auto;
  border-radius: 50%;
  background: ${(p) => (p.$active ? '#e39a52' : '#888a93')};
`;

const NewTab = styled.button`
  margin-left: 23px;
`;

const TitleRight = styled.div`
  display: flex;
  align-items: center;
  margin-left: auto;
  padding-right: 2px;
`;

const WindowButton = styled.button`
  justify-content: center;
  width: 43px;
  height: 42px;
  &:last-child {
    width: 18px;
    margin-left: 12px;
  }
`;

const TitleLine = styled.i`
  width: 1px;
  height: 20px;
  margin: 0 21px 0 7px;
  background: #696c78;
`;

const User = styled.button`
  gap: 8px;
  padding-right: 16px;
  color: #b7bac2;
`;

const Avatar = styled.i`
  width: 24px;
  height: 24px;
  border-radius: 50%;
  background: radial-gradient(#e8eef2, #c3d3dd);
`;

/* menu bar */
const MenuBarBox = styled.nav`
  display: flex;
  align-items: center;
  flex: none;
  height: 54px;
  padding-top: 1px;
  background: #e9e9e9;
`;

const FileButton = styled.button`
  height: 34px;
  margin-left: 22px;
  padding-right: 12px;
  gap: 9px;
  border-right: 1px solid #c4c4c4;
`;

const QuickBar = styled.div`
  display: flex;
  margin-left: 8px;
`;

const QuickButton = styled.button`
  justify-content: center;
  width: 35px;
  height: 34px;
`;

const Menus = styled.div`
  display: flex;
  margin-left: 7px;
  flex: 1;
`;

const MenuItem = styled.button`
  height: 28px;
  padding: 0 18px;
  ${(p) =>
    p.$active &&
    css`
      margin: 0 6px 0 5px;
      padding: 0 13px;
      border-radius: 14px;
      background: #4a86e0;
      color: #fff;
      font-weight: 700;
    `}
`;

const MenuRight = styled.div`
  display: flex;
  align-items: center;
  gap: 20px;
  padding-right: 13px;
`;

const Finder = styled.button`
  height: 28px;
`;

const HelpButton = styled.button`
  justify-content: center;
  min-width: 16px;
`;

/* ribbon */
const Ribbon = styled.section`
  display: flex;
  flex: none;
  padding-top: 4px;
  border-top: 1px solid #d2d2d2;
  border-bottom: 1px solid #c4c4c4;
  background: #e9e9e9;
`;

const Group = styled.div`
  position: relative;
  display: flex;
  padding: 4px 7px 16px;
  border-right: ${(p) => (p.$last ? 'none' : '1px solid #cdcdcd')};
  ${(p) => p.$first && 'padding-left: 9px;'}
`;

const Corner = styled.i`
  position: absolute;
  right: 8px;
  bottom: 5px;
  width: 6px;
  height: 6px;
  border-right: 1px solid #c6c6c6;
  border-bottom: 1px solid #c6c6c6;
`;

const Stack = styled.div`
  display: flex;
  flex-direction: column;
  gap: 3px;
`;

const Row = styled.div`
  display: flex;
  gap: 4px;
  height: 34px;
`;

const Cluster = styled.div`
  display: flex;
`;

const ToolButton = styled.button`
  width: ${(p) => (p.$caret ? 48 : 35)}px;
  height: 34px;
`;

const ToolFace = styled.span`
  display: flex;
  flex-direction: column;
  align-items: center;
  justify-content: center;
  width: 34px;
  height: 34px;
  border-radius: 5px;
  background: ${(p) => (p.$active ? '#b9b9b9' : 'none')};
`;

const Letter = styled.b`
  font-size: 22px;
`;

const Pinyin = styled.span`
  font-size: 13px;
  line-height: 15px;
  color: #2f74bd;
`;

const PinyinBase = styled.span`
  font-size: 14px;
  line-height: 15px;
`;

const BigButton = styled.button`
  flex-direction: column;
  gap: 8px;
  height: 71px;
  padding: 5px 8px 0;
  color: ${(p) => (p.$muted ? '#a9a9a9' : '#222')};
  svg {
    height: 32px;
  }
`;

const BigLabel = styled.span`
  display: flex;
  align-items: center;
  gap: 4px;
`;

const SmallButton = styled.button`
  gap: 6px;
  height: 34px;
  padding: 0 7px 0 8px;
  color: #a9a9a9;
`;

const Combos = styled.div`
  display: flex;
  width: 274px;
  border: 1px solid #a3a3a3;
  border-radius: 5px;
  background: #ededed;
`;

const Combo = styled.label`
  display: flex;
  align-items: center;
  width: 110px;
  padding: 0 5px 0 4px;
  ${(p) =>
    p.$grow &&
    css`
      flex: 1;
      padding-left: 8px;
      border-right: 1px solid #a3a3a3;
    `}
`;

const Select = styled.select`
  flex: 1;
  min-width: 0;
  height: 32px;
  padding: 0;
  border: none;
  background: none;
  line-height: 26px;
  appearance: none;
`;

const Gallery = styled.div`
  display: flex;
  height: 70px;
  margin-right: 7px;
  border: 1px solid #b3b3b3;
  border-radius: 5px;
  background: #eee;
  overflow: hidden;
`;

const StyleCard = styled.button`
  flex-direction: column;
  justify-content: space-between;
  width: 91px;
  padding: 6px 3px 3px;
  border-radius: 4px;
  box-shadow: ${(p) => (p.$active ? 'inset 0 0 0 3px #b9b9b9' : 'none')};
`;

const Sample = styled.span`
  display: flex;
  align-items: center;
  width: 100%;
  height: 36px;
  overflow: hidden;
  color: #111;
  font-size: ${(p) => p.$size}px;
  font-weight: ${(p) => p.$weight};
`;

const GalleryNav = styled.div`
  display: grid;
  width: 18px;
  border-left: 1px solid #b3b3b3;
`;

const NavButton = styled.button`
  justify-content: center;
  & + & {
    border-top: 1px solid #b3b3b3;
  }
`;

const RibbonMore = styled.button`
  justify-content: flex-end;
  width: 10px;
  margin: -4px 0 2px auto;
  background: #b4b7be;
`;

/* document */
const WorkspaceBox = styled.main`
  position: relative;
  display: flex;
  flex: 1;
  min-height: 0;
  background: #d9d9d9;
`;

const Desk = styled.div`
  display: flex;
  justify-content: center;
  flex: 1;
  padding-top: 26px;
  overflow: hidden;
`;

const Page = styled.article`
  position: relative;
  width: 1115px;
  padding: 103px 134px 0;
  background: #fff;
  box-shadow: 0 0 18px rgba(0, 0, 0, 0.3);
`;

const Marks = styled.div`
  display: flex;
  justify-content: space-between;
`;

const Mark = styled.i`
  width: 34px;
  height: 34px;
  border-bottom: 1px solid #bdbdbd;
  ${(p) => (p.$left ? 'border-right' : 'border-left')}: 1px solid #bdbdbd;
`;

const Pointer = styled.span`
  position: absolute;
  left: 520px;
  top: 163px;
`;

const ScrollTrack = styled.div`
  display: flex;
  flex-direction: column;
  align-items: flex-end;
  gap: 20px;
  width: 11px;
  padding: 4px 0 8px;
  background: #d2d2d2;
`;

const ScrollThumb = styled.i`
  width: 11px;
  height: 300px;
  margin-top: -8px;
  border: 1px solid #999;
  border-right: none;
  border-radius: 8px 0 0 8px;
  background: #f2f2f2;
`;

const ScrollEnd = styled.div`
  display: flex;
  flex-direction: column;
  gap: 14px;
  margin-top: auto;
`;

const Monitor = styled.aside`
  position: absolute;
  right: 26px;
  top: 372px;
  display: flex;
  align-items: center;
`;

const Speeds = styled.div`
  width: 124px;
  margin-right: -40px;
  padding: 0 0 0 15px;
  border-radius: 29px 0 0 29px;
  background: #242934;
  box-shadow: 0 0 8px rgba(0, 0, 0, 0.35);
`;

const Speed = styled.div`
  display: flex;
  align-items: center;
  gap: 19px;
  height: 29px;
`;

const Rate = styled.span`
  color: #9497a0;
  font-size: 15px;
  font-family: 'Liberation Sans', sans-serif;
  strong {
    font-size: 18px;
    color: #f2f2f2;
  }
`;

const Dial = styled.div`
  position: relative;
  display: grid;
  place-items: center;
  width: 83px;
  height: 83px;
  border-radius: 50%;
  background: #494e5e;
  box-shadow: 0 0 0 1px #2e323d, 0 0 8px rgba(0, 0, 0, 0.4);
`;

const DialRing = styled.svg`
  position: absolute;
  inset: 0;
`;

const DialText = styled.span`
  padding-top: 4px;
  color: #eef0f4;
  font-family: Roboto, sans-serif;
  font-size: 35px;
  font-weight: 300;
  small {
    font-size: 15px;
    font-weight: 500;
  }
`;

/* status bar */
const StatusBarBox = styled.footer`
  display: flex;
  flex: none;
  height: 41px;
  border-top: 1px solid #c6c6c6;
  background: #e8e8e8;
`;

const StatusItem = styled.div`
  display: flex;
  align-items: center;
  gap: ${(p) => (p.$tight ? 6 : 20)}px;
  padding: 0 ${(p) => (p.$wide ? 14 : 8)}px 0 13px;
  border-right: ${(p) => (p.$link ? 'none' : '1px solid #d6d6d6')};
  color: ${(p) => (p.$link ? '#4a83cf' : '#444')};
  white-space: nowrap;
`;

const Views = styled.div`
  display: flex;
  align-items: center;
  gap: 4px;
  margin-left: auto;
  padding-right: 14px;
  border-right: 1px solid #d6d6d6;
`;

const ViewButton = styled.button`
  justify-content: center;
  width: 32px;
  height: 34px;
  border-radius: 5px;
  background: ${(p) => (p.$active ? '#bababa' : 'none')};
`;

const Zoom = styled.div`
  display: flex;
  align-items: center;
  gap: 4px;
  padding: 0 7px 0 16px;
`;

const ZoomValue = styled.button`
  gap: 8px;
  margin-right: 4px;
`;

const Slider = styled.input`
  width: 194px;
  height: 20px;
  margin: 0 4px;
  background: linear-gradient(#999, #999) center / 100% 1px no-repeat;
  appearance: none;
  &::-webkit-slider-thumb {
    width: 18px;
    height: 18px;
    border: 2px solid #666;
    border-radius: 50%;
    background: #eee;
    appearance: none;
  }
`;

/* taskbar */
const TaskbarBox = styled.footer`
  display: flex;
  flex: none;
  height: 56px;
  border-top: 1px solid #8f866d;
  background: linear-gradient(#c5b99d, #bbae91);
`;

const TaskButton = styled.button`
  justify-content: center;
  width: 84px;
  margin-right: 3px;
  border: 1px solid transparent;
  ${(p) => p.$start && 'width: 70px; margin-right: 2px;'}
  ${(p) =>
    p.$open &&
    css`
      border-color: #877d64;
      background: #cdc3ab;
      box-shadow: inset 0 0 0 1px #ddd5c2;
    `}
  ${(p) => p.$current && 'background: #dad1bd; box-shadow: inset 0 0 0 2px #f4eedf;'}
  ${(p) =>
    p.$stacked &&
    css`
      width: 77px;
      margin-right: 10px;
      box-shadow: inset 0 0 0 1px #ddd5c2, 5px 0 0 #cdc3ab, 6px 0 0 #877d64;
    `}
`;

const NetEase = styled.span`
  display: grid;
  place-items: center;
  width: 45px;
  height: 45px;
  border-radius: 7px;
  background: #e83c09;
  color: #fff;
`;

const Tray = styled.div`
  display: flex;
  align-items: center;
  margin-left: auto;
`;

const TrayButton = styled.button`
  justify-content: center;
  width: ${(p) => (p.$wide ? 40 : 34)}px;
  height: 34px;
`;

const Ime = styled.span`
  color: #fff;
  font-size: 20px;
  font-weight: 700;
  text-shadow: 0 0 2px #333, 0 0 2px #333;
`;

const ImeMode = styled.span`
  width: 22px;
  height: 22px;
  border: 1px solid #4d4737;
  background: #fff;
  color: #222;
  font-size: 20px;
  text-align: center;
`;

const Clock = styled.button`
  flex-direction: column;
  gap: 5px;
  padding: 0 20px 0 23px;
  color: #fff;
`;

/* overlays */
const Caption = styled.p`
  position: absolute;
  left: 0;
  right: 0;
  bottom: 79px;
  margin: 0;
  color: #e6e6e6;
  font-size: 49px;
  font-weight: 500;
  line-height: 60px;
  text-align: center;
  -webkit-text-stroke: 4px #111;
  paint-order: stroke fill;
`;

const Arrow = styled.svg`
  position: absolute;
  right: 192px;
  bottom: 31px;
  width: 460px;
  height: 110px;
`;
